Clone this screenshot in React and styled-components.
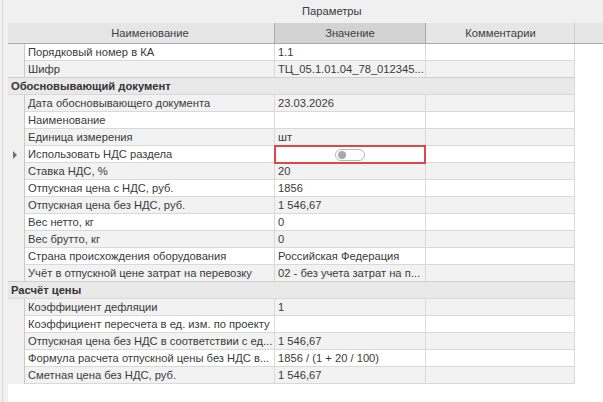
import React from 'react'
import styled, { createGlobalStyle } from 'styled-components'

const GlobalStyle = createGlobalStyle`
    html, body {
        margin: 0;
        padding: 0;
        background: #ffffff;
    }
    body {
        font-family: "Liberation Sans", Arial, sans-serif;
        font-size: 11.2px;
        color: #3a3a3a;
    }
`;

const rows = [
    { name: 'Порядковый номер в КА', value: '1.1' },
    { name: 'Шифр', value: 'ТЦ_05.1.01.04_78_012345...' },
    { group: 'Обосновывающий документ' },
    { name: 'Дата обосновывающего документа', value: '23.03.2026' },
    { name: 'Наименование', value: '' },
    { name: 'Единица измерения', value: 'шт' },
    { name: 'Использовать НДС раздела', toggle: true, current: true },
    { name: 'Ставка НДС, %', value: '20' },
    { name: 'Отпускная цена с НДС, руб.', value: '1856' },
    { name: 'Отпускная цена без НДС, руб.', value: '1 546,67' },
    { name: 'Вес нетто, кг', value: '0' },
    { name: 'Вес брутто, кг', value: '0' },
    { name: 'Страна происхождения оборудования', value: 'Российская Федерация' },
    { name: 'Учёт в отпускной цене затрат на перевозку', value: '02 - без учета затрат на п...' },
    { group: 'Расчёт цены' },
    { name: 'Коэффициент дефляции', value: '1' },
    { name: 'Коэффициент пересчета в ед. изм. по проекту', value: '' },
    { name: 'Отпускная цена без НДС в соответствии с ед...', value: '1 546,67' },
    { name: 'Формула расчета отпускной цены без НДС в...', value: '1856 / (1 + 20 / 100)' },
    { name: 'Сметная цена без НДС, руб.', value: '1 546,67' },
]

function App() {
    return (
        <>
            <GlobalStyle />
            <Window>
                <LeftStrip />
                <TitleBar>Параметры</TitleBar>
                <Grid>
                    <HeaderRow>
                        <HeadCell />
                        <HeadCell>Наименование</HeadCell>
                        <HeadCell $sorted>Значение</HeadCell>
                        <HeadCell>Комментарии</HeadCell>
                        <HeadCell $last />
                    </HeaderRow>
                    {rows.map((row, i) => {
                        if (row.group) {
                            return (
                                <GroupRow key={i}>
                                    <GroupCell>{row.group}</GroupCell>
                                    <Filler />
                                </GroupRow>
                            )
                        }
                        return (
                            <Row key={i}>
                                <Indicator>{row.current && <Arrow />}</Indicator>
                                <Cell $alt={i % 2 === 1}>{row.name}</Cell>
                                {row.toggle ? (
                                    <ToggleCell $alt={i % 2 === 1}>
                                        <Switch><Knob /></Switch>
                                    </ToggleCell>
                                ) : (
                                    <Cell $alt={i % 2 === 1}>{row.value}</Cell>
                                )}
                                <Cell $alt={i % 2 === 1} />
                                <Filler />
                            </Row>
                        )
                    })}
                </Grid>
            </Window>
        </>
    )
}

const Window = styled.div`
    width: 603px;
    height: 402px;
    overflow: hidden;
    display: grid;
    grid-template-columns: 8px 1fr;
    grid-template-rows: 23px 1fr;
    background: #ffffff;
`;

const LeftStrip = styled.div`
    grid-row: 1 / 3;
    background: #f0f0f0;
    position: relative;
    &::after{
        content: '';
        position: absolute;
        left: 2px;
        top: 0;
        bottom: 0;
        width: 1px;
        background: #d6d6d6;
    }
`;

const TitleBar = styled.div`
    background: #f0f0f0;
    padding-left: 294px;
    padding-top: 5px;
    box-sizing: border-box;
    color: #3a3a3a;
`;

const Grid = styled.div`
    display: flex;
    flex-direction: column;
    align-self: start;
`;

const columns = '17px 250px 151px 149px 1fr';

const HeaderRow = styled.div`
    display: grid;
    grid-template-columns: ${columns};
    height: 21px;
    background: #e6e6e6;
    border-bottom: 1px solid #a9a9a9;
    box-sizing: border-box;
`;

const HeadCell = styled.div`
    display: flex;
    align-items: center;
    justify-content: center;
    color: #404040;
    background: ${p => p.$sorted ? '#d3d3d3' : 'transparent'};
    border-right: 1px solid ${p => p.$sorted ? '#a9a9a9' : p.$last ? 'transparent' : '#d0d0d0'};
    border-left: 1px solid ${p => p.$sorted ? '#a9a9a9' : 'transparent'};
    margin-left: ${p => p.$sorted ? '-1px' : '0'};
    &:first-child{
        border-right: none;
    }
`;

const Row = styled.div`
    display: grid;
    grid-template-columns: ${columns};
    height: 17px;
`;

const Indicator = styled.div`
    background: #f0f0f0;
    border-right: 1px solid #c8c8c8;
    display: flex;
    align-items: center;
    padding-left: 5px;
`;

const Arrow = styled.span`
    width: 0;
    height: 0;
    border-top: 4px solid transparent;
    border-bottom: 4px solid transparent;
    border-left: 4px solid #707070;
`;

const Cell = styled.div`
    background: ${p => p.$alt ? '#f2f2f2' : '#ffffff'};
    border-right: 1px solid #d9d9d9;
    border-bottom: 1px solid #d9d9d9;
    padding: 1px 0 0 3px;
    box-sizing: border-box;
    white-space: nowrap;
    overflow: hidden;
    text-overflow: ellipsis;
    line-height: 14px;
`;

const ToggleCell = styled.div`
    background: ${p => p.$alt ? '#f2f2f2' : '#ffffff'};
    border: 2px solid #e04848;
    margin: -1px 0 -1px -1px;
    box-sizing: border-box;
    display: flex;
    align-items: center;
    justify-content: center;
    position: relative;
    z-index: 1;
    height: 19px;
`;

const Switch = styled.div`
    width: 30px;
    height: 12px;
    border: 1px solid #b8b8b8;
    border-radius: 7px;
    background: #ffffff;
    display: flex;
    align-items: center;
    padding-left: 2px;
    box-sizing: border-box;
`;

const Knob = styled.div`
    width: 8px;
    height: 8px;
    border-radius: 50%;
    background: #a8a8a8;
`;

const Filler = styled.div`
    background: #ffffff;
    border-left: 1px solid #d9d9d9;
    margin-left: -1px;
`;

const GroupRow = styled.div`
    display: grid;
    grid-template-columns: 567px 1fr;
    height: 17px;
`;

const GroupCell = styled.div`
    background: #e9e9e9;
    border-top: 1px solid #cfcfcf;
    border-bottom: 1px solid #d9d9d9;
    margin-top: -1px;
    height: 18px;
    box-sizing: border-box;
    font-weight: bold;
    padding: 1px 0 0 3px;
    line-height: 14px;
    color: #333333;
`;

export default App
